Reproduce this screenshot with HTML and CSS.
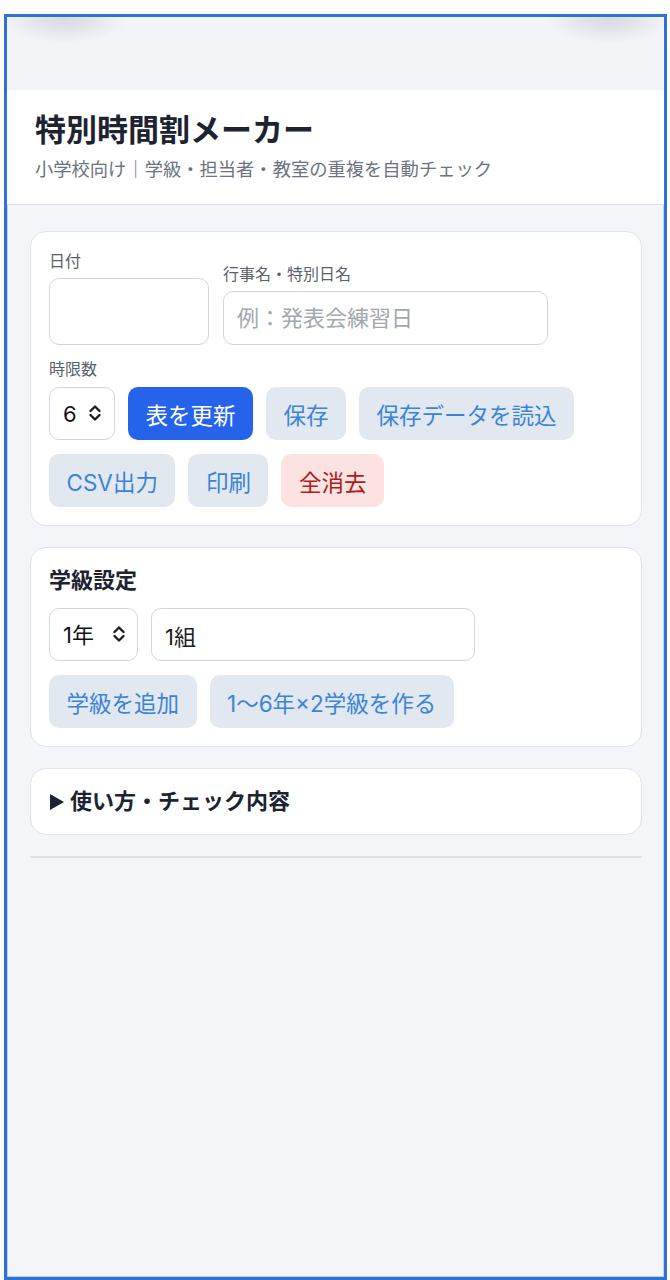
FILE: index.html
```html
<!DOCTYPE html>
<html lang="ja">
<head>
    <meta charset="UTF-8">
    <meta name="viewport" content="width=device-width, initial-scale=1.0">
    <title>特別時間割メーカー</title>
    <link rel="stylesheet" href="styles.css">
</head>
<body>
    <div class="device">
        <div class="status-bar"></div>

        <header class="app-header">
            <h1>特別時間割メーカー</h1>
            <p class="subtitle">小学校向け｜学級・担当者・教室の重複を自動チェック</p>
        </header>

        <main class="content">
            <!-- 日付・行事名と操作ボタン -->
            <section class="card">
                <div class="field-row">
                    <label class="field">
                        <span class="field-label">日付</span>
                        <input type="date" class="input date-input">
                    </label>
                    <label class="field">
                        <span class="field-label">行事名・特別日名</span>
                        <input type="text" class="input name-input" placeholder="例：発表会練習日">
                    </label>
                </div>

                <div class="field-label periods-label">時限数</div>
                <div class="toolbar">
                    <span class="select-wrap period-select">
                        <select class="select">
                            <option>4</option>
                            <option>5</option>
                            <option selected>6</option>
                            <option>7</option>
                        </select>
                        <svg class="chevrons" width="14" height="22" viewBox="0 0 14 22"><path d="M2.5 9 7 4.5 11.5 9M2.5 13 7 17.5 11.5 13"/></svg>
                    </span>
                    <button class="btn btn-primary">表を更新</button>
                    <button class="btn">保存</button>
                    <button class="btn">保存データを読込</button>
                    <button class="btn">CSV出力</button>
                    <button class="btn">印刷</button>
                    <button class="btn btn-danger">全消去</button>
                </div>
            </section>

            <!-- 学級設定 -->
            <section class="card">
                <h2 class="card-title">学級設定</h2>
                <div class="toolbar">
                    <span class="select-wrap grade-select">
                        <select class="select">
                            <option selected>1年</option>
                            <option>2年</option>
                            <option>3年</option>
                            <option>4年</option>
                            <option>5年</option>
                            <option>6年</option>
                        </select>
                        <svg class="chevrons" width="14" height="22" viewBox="0 0 14 22"><path d="M2.5 9 7 4.5 11.5 9M2.5 13 7 17.5 11.5 13"/></svg>
                    </span>
                    <input type="text" class="input class-input" value="1組">
                </div>
                <div class="toolbar">
                    <button class="btn">学級を追加</button>
                    <button class="btn">1〜6年×2学級を作る</button>
                </div>
            </section>

            <details class="card help">
                <summary>使い方・チェック内容</summary>
            </details>

            <div class="divider"></div>
        </main>
    </div>
</body>
</html>
```

FILE: styles.css
```css
html, body {
    margin: 0;
    background-color: #ffffff;
}
body {
    font-family: "Inter", "Noto Sans CJK JP", sans-serif;
    color: #1f2633;
}
.device {
    box-sizing: border-box;
    width: 663px;
    height: 1266px;
    margin: 14px 0 0 4px;
    border: 3px solid #2f72d4;
    box-shadow: inset 0 0 0 1px #b9d2f3;
    background-color: #f4f5f9;
    overflow: hidden;
}
/* blurred shapes at the top corners of the status area */
.status-bar {
    height: 73px;
    background:
        radial-gradient(ellipse 62px 24px at 58px 2px, rgba(176,180,188,0.42), rgba(176,180,188,0) 100%),
        radial-gradient(ellipse 62px 24px at 602px 2px, rgba(176,180,188,0.42), rgba(176,180,188,0) 100%),
        #f3f4f8;
}
.app-header {
    background-color: #ffffff;
    padding: 20px 28px 22px;
    border-bottom: 1px solid #dde1e8;
}
.app-header h1 {
    margin: 0;
    font-size: 31px;
    line-height: 40px;
    font-weight: 700;
    color: #1d2330;
}
.subtitle {
    margin: 7px 0 0;
    font-size: 18.3px;
    line-height: 25px;
    color: #6b7280;
}
.content {
    padding: 26px 22px 0 23px;
}
.card {
    background-color: #ffffff;
    border: 1px solid #dfe3ea;
    border-radius: 16px;
    padding: 18px;
    margin-bottom: 21px;
}
.field-row {
    display: flex;
    align-items: flex-end;
    gap: 14px;
}
.field {
    display: flex;
    flex-direction: column;
    gap: 6px;
}
.field-label {
    font-size: 16px;
    line-height: 22px;
    color: #5b616b;
}
.periods-label {
    margin-top: 13px;
    margin-bottom: 7px;
}
.input {
    box-sizing: border-box;
    border: 1px solid #d2d6dd;
    border-radius: 10px;
    background-color: #ffffff;
    font-family: inherit;
    font-size: 22px;
    color: #1a1d23;
    padding: 0 13px;
    outline: none;
}
.input::placeholder {
    color: #a3a7ae;
}
.date-input {
    width: 160px;
    height: 67px;
}
.date-input::-webkit-datetime-edit,
.date-input::-webkit-calendar-picker-indicator {
    display: none;
}
.name-input {
    width: 325px;
    height: 54px;
}
.class-input {
    width: 324px;
    height: 53px;
}
.toolbar {
    display: flex;
    flex-wrap: wrap;
    gap: 14px 13px;
}
.toolbar + .toolbar {
    margin-top: 14px;
}
.select-wrap {
    position: relative;
    display: inline-block;
}
.select {
    appearance: none;
    -webkit-appearance: none;
    box-sizing: border-box;
    height: 53px;
    border: 1px solid #d2d6dd;
    border-radius: 10px;
    background-color: #ffffff;
    font-family: inherit;
    font-size: 22px;
    color: #111318;
    padding: 0 13px;
    outline: none;
}
.period-select .select {
    width: 66px;
}
.grade-select .select {
    width: 89px;
}
.chevrons {
    position: absolute;
    right: 13px;
    top: 15px;
    pointer-events: none;
}
.grade-select .chevrons {
    right: 12px;
}
.chevrons path {
    fill: none;
    stroke: #1a1d23;
    stroke-width: 2.4;
    stroke-linecap: round;
    stroke-linejoin: round;
}
.btn {
    height: 53px;
    padding: 0 17.5px;
    border: none;
    border-radius: 10px;
    background-color: #e2e8f0;
    color: #3a84d8;
    font-family: inherit;
    font-size: 22.5px;
    cursor: pointer;
}
.btn-primary {
    background-color: #2563eb;
    color: #ffffff;
}
.btn-danger {
    background-color: #fde2e2;
    color: #a91d1d;
}
.card-title {
    margin: 0 0 13px;
    font-size: 22px;
    line-height: 29px;
    font-weight: 700;
    color: #1d2330;
}
.help {
    padding: 18px 19px;
}
.help summary {
    list-style: none;
    display: flex;
    align-items: center;
    font-size: 22px;
    line-height: 29px;
    font-weight: 700;
    color: #1d2330;
    cursor: pointer;
}
.help summary::-webkit-details-marker {
    display: none;
}
.help summary::before {
    content: "";
    border-left: 14px solid #1d2330;
    border-top: 8px solid transparent;
    border-bottom: 8px solid transparent;
    margin-right: 6px;
}
.divider {
    height: 2px;
    background-color: #dadfe8;
    margin-top: 19px;
}
```
